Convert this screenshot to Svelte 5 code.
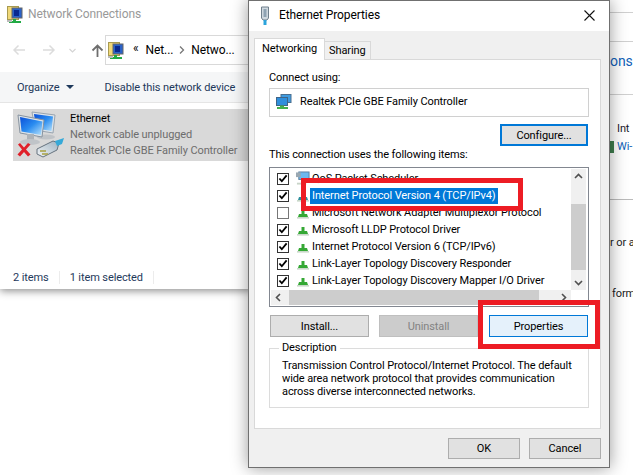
<script lang="ts">
  const items = [
    { label: 'QoS Packet Scheduler', checked: true, icon: 'qos' },
    { label: 'Internet Protocol Version 4 (TCP/IPv4)', checked: true, selected: true },
    { label: 'Microsoft Network Adapter Multiplexor Protocol', checked: false },
    { label: 'Microsoft LLDP Protocol Driver', checked: true },
    { label: 'Internet Protocol Version 6 (TCP/IPv6)', checked: true },
    { label: 'Link-Layer Topology Discovery Responder', checked: true },
    { label: 'Link-Layer Topology Discovery Mapper I/O Driver', checked: true },
  ];
</script>

{#snippet netIcon()}
  <svg width="16" height="17" viewBox="0 0 16 17">
    <rect x="0.5" y="0.5" width="11" height="13" fill="#f0d878" stroke="#a89a50" />
    <rect x="5" y="2" width="10" height="10" fill="#2a62c8" stroke="#666" />
    <rect x="7" y="4" width="5" height="6" fill="#0a2a90" />
    <path d="M6 13h3v2h5v2H2v-2h4z" fill="#22aa44" />
    <rect x="0" y="14" width="5" height="2" fill="#bbb" />
  </svg>
{/snippet}

{#snippet greenNet(color = '#35a835')}
  <svg class="item-icon" width="14" height="15" viewBox="0 0 14 15">
    <path d="M5.500 5h3v4h-3z" fill={color} />
    <path d="M3 9h8l1 3H2z" fill={color} />
    <rect x="1" y="12" width="12" height="1.600" fill="#c9d8c9" />
  </svg>
{/snippet}

{#snippet chev(d)}
  <svg width="9" height="9" viewBox="0 0 9 9"><path d={d} fill="none" stroke="#505050" stroke-width="1.600" /></svg>
{/snippet}

<div class="desktop">
  <!-- window behind, only its right edge shows -->
  <div class="back">
    <div class="back-sec s1"></div>
    <div class="back-sec s2"></div>
    <div class="back-sec s3"><span class="link big">ons</span></div>
    <div class="back-sec s4">
      <div class="int">Int</div>
      <div class="wifi"><i class="bar"></i><span class="link">Wi-</span></div>
    </div>
    <div class="frag f1">r or a</div>
    <div class="frag f2">form</div>
  </div>

  <div class="explorer">
    <div class="ex-title">
      {@render netIcon()}
      <span>Network Connections</span>
    </div>
    <div class="ex-nav">
      <div class="nav-btns">
        <svg width="14" height="12" viewBox="0 0 14 12"><path d="M13 6H2M6.500 1.500 2 6l4.500 4.500" fill="none" stroke="#dcdcdc" stroke-width="1.500" /></svg>
        <svg width="14" height="12" viewBox="0 0 14 12"><path d="M1 6h11M7.500 1.500 12 6l-4.500 4.500" fill="none" stroke="#dcdcdc" stroke-width="1.500" /></svg>
        <svg class="drop" width="7" height="5" viewBox="0 0 7 5"><path d="M.5 1 3.500 4l3-3" fill="none" stroke="#d4d4d4" stroke-width="1.200" /></svg>
        <svg class="up" width="13" height="13" viewBox="0 0 13 13"><path d="M6.500 13V2M1.500 6.500l5-5 5 5" fill="none" stroke="#6e6e6e" stroke-width="1.800" /></svg>
      </div>
      <div class="address">
        {@render netIcon()}
        <span class="crumb-mark">«</span>
        <span>Net...</span>
        <svg width="6" height="8" viewBox="0 0 6 8"><path d="M1 .5 4.500 4 1 7.500" fill="none" stroke="#777" stroke-width="1.300" /></svg>
        <span>Netwo...</span>
      </div>
    </div>
    <div class="ex-toolbar">
      <span>Organize</span>
      <i class="caret"></i>
      <span class="disable">Disable this network device</span>
    </div>
    <div class="ex-list">
      <div class="conn">
        <svg class="conn-icon" width="50" height="50" viewBox="0 0 50 50">
          <defs>
            <linearGradient id="scr" x1="0" y1="0" x2="1" y2="1">
              <stop offset="0" stop-color="#0a4fd8" />
              <stop offset="0.5" stop-color="#2a8cf0" />
              <stop offset="1" stop-color="#b8e2fb" />
            </linearGradient>
            <linearGradient id="plug" x1="0" y1="1" x2="1" y2="0">
              <stop offset="0" stop-color="#f2f5f7" />
              <stop offset="1" stop-color="#9fb2c0" />
            </linearGradient>
          </defs>
          <path d="M17 3 40 6 38 24 20 21z" fill="#dde4ea" stroke="#98a4b0" />
          <path d="M19 5 38 7.500 36.500 22 21 19.500z" fill="url(#scr)" />
          <ellipse cx="31" cy="28" rx="9" ry="2.500" fill="#bfc3c7" />
          <path d="M3 6 29 11 27 28 5 24z" fill="#dde4ea" stroke="#8793a0" />
          <path d="M5 8 27.500 12.500 26 26 6.500 22.500z" fill="url(#scr)" />
          <path d="M12 25h7v6h-7z" fill="#aeb3b8" />
          <ellipse cx="15" cy="33" rx="10" ry="3" fill="#c0c4c8" />
          <path d="M22 40 38 32l6 2-2 7-14 7-6-3z" fill="url(#plug)" stroke="#66737f" />
          <path d="M40 32 49 29l-2 6-5 2z" fill="#36a9d8" />
          <path d="M25 42h6M27 45h6" stroke="#a8a040" stroke-width="1.500" />
          <path d="M3 35.500 5 34l4 4.500 4-4.500 2.500 1.500-4.500 5 4.500 5-2.500 2-4-4.500-4 4.500-2.500-2 4.500-5z" fill="#e0202a" />
        </svg>
        <div class="conn-text">
          <div class="conn-name">Ethernet</div>
          <div>Network cable unplugged</div>
          <div>Realtek PCIe GBE Family Controller</div>
        </div>
      </div>
    </div>
    <div class="ex-status">
      <span class="stat">2 items</span>
      <span class="stat">1 item selected</span>
    </div>
  </div>

  <div class="dialog">
    <div class="dlg-title">
      <svg width="10" height="19" viewBox="0 0 10 19">
        <path d="M1.500 1h7v11l-1.500 2h-4L1.500 12z" fill="#cfd8df" stroke="#6f7f8c" />
        <path d="M3.500 3h3v8h-3z" fill="#8ea2b2" />
        <path d="M3.500 14h3v5h-3z" fill="#2ba4dc" />
      </svg>
      <span class="dlg-name">Ethernet Properties</span>
      <svg class="close" width="11" height="11" viewBox="0 0 11 11"><path d="M.5.5l10 10M10.500.5l-10 10" stroke="#111" stroke-width="1.100" /></svg>
    </div>
    <div class="dlg-body">
      <div class="tabs">
        <div class="tab active">Networking</div>
        <div class="tab">Sharing</div>
      </div>
      <div class="panel">
        <div class="lbl connect">Connect using:</div>
        <div class="adapter">
          <svg width="16" height="15" viewBox="0 0 16 15">
            <rect x="5" y="0.500" width="10" height="8" fill="#3f9be0" stroke="#4a6f90" />
            <rect x="0.500" y="3.500" width="11" height="8" fill="#2f8fdc" stroke="#3f6486" />
            <path d="M4 11.500h4v1.500h4v2H1v-2h3z" fill="#44b04c" />
          </svg>
          <span>Realtek PCIe GBE Family Controller</span>
        </div>
        <div class="cfg-row"><button class="btn cfg">Configure...</button></div>
        <div class="lbl uses">This connection uses the following items:</div>
        <div class="listbox">
          <div class="rows">
            {#each items as item, i}
              <div class="row">
                <span class="check" class:off={!item.checked}>
                  {#if item.checked}
                    <svg width="11" height="11" viewBox="0 0 11 11"><path d="M1.500 5.500 4.200 8.500 9.500 2" fill="none" stroke="#000" stroke-width="2" /></svg>
                  {/if}
                </span>
                {#if item.icon === 'qos'}
                  <svg class="item-icon" width="14" height="15" viewBox="0 0 15 15">
                    <rect x="3" y="0.500" width="11" height="8" fill="#6cb8ee" stroke="#5a7f9f" />
                    <rect x="0" y="1" width="5" height="5" fill="#9aa8b2" />
                    <path d="M1 12h10v2H1z" fill="#c8d4c8" />
                  </svg>
                {:else}
                  {@render greenNet(i === 1 ? '#2f8f9c' : '#35a835')}
                {/if}
                <span class="row-label" class:sel={item.selected}>{item.label}</span>
              </div>
            {/each}
          </div>
          <div class="vbar">
            {@render chev('M1 6 4.500 2.500 8 6')}
            <div class="vthumb"></div>
            {@render chev('M1 3 4.500 6.500 8 3')}
          </div>
          <div class="hbar">
            {@render chev('M6 1 2.500 4.500 6 8')}
            <div class="hthumb"></div>
            {@render chev('M3 1 6.500 4.500 3 8')}
          </div>
        </div>
        <div class="btn-row">
          <button class="btn">Install...</button>
          <button class="btn disabled">Uninstall</button>
          <button class="btn hot">Properties</button>
        </div>
        <fieldset class="desc">
          <legend>Description</legend>
          <p>Transmission Control Protocol/Internet Protocol. The default<br />wide area network protocol that provides communication<br />across diverse interconnected networks.</p>
        </fieldset>
      </div>
      <div class="dlg-foot">
        <button class="btn foot">OK</button>
        <button class="btn foot">Cancel</button>
      </div>
    </div>
  </div>

  <!-- red annotations drawn on the screenshot -->
  <div class="mark mark-ip"></div>
  <div class="mark mark-btn"></div>
</div>

<style>
  :global(body) {
    margin: 0;
    background: #fff;
  }

  .desktop {
    position: relative;
    width: 633px;
    height: 475px;
    overflow: hidden;
    background: #fff;
    font-family: Roboto, "Noto Sans", sans-serif;
    font-size: 11px;
    letter-spacing: -0.1px;
    color: #000;
  }

  .back {
    position: absolute;
    left: 600px;
    top: 0;
    width: 33px;
    height: 340px;
    padding-left: 10px;
    box-sizing: border-box;
  }
  .back-sec {
    border-bottom: 1px solid #d0d0d0;
    box-sizing: border-box;
    margin-left: -10px;
    padding-left: 10px;
  }
  .s1 { height: 13px; }
  .s2 { height: 29px; }
  .s3 { height: 53px; padding-top: 11px; }
  .s4 { height: 105px; padding-top: 25px; border-color: #bbb; }
  .big { font-size: 14px; }
  .link { color: #0f5fb8; }
  .int { margin-left: 7px; color: #1a1a2a; line-height: 18px; }
  .wifi {
    display: flex;
    align-items: center;
    gap: 3px;
    line-height: 18px;
  }
  .bar {
    width: 4px;
    height: 12px;
    background: #3f7f4f;
  }
  .frag { color: #222; white-space: nowrap; }
  .f1 { margin-top: 36px; }
  .f2 { margin: 38px 0 0 2px; }

  .explorer {
    position: absolute;
    left: 0;
    top: 0;
    width: 252px;
    height: 289px;
    display: flex;
    flex-direction: column;
    background: #fff;
    box-shadow: 0 2px 8px rgba(0, 0, 0, 0.45);
  }
  .ex-title {
    display: flex;
    align-items: center;
    gap: 5px;
    height: 28px;
    padding-left: 7px;
    font-size: 12px;
    color: #999;
  }
  .ex-nav {
    display: flex;
    align-items: flex-start;
    height: 44px;
    padding-top: 7px;
    box-sizing: border-box;
  }
  .nav-btns {
    display: flex;
    align-items: center;
    width: 105px;
    height: 30px;
    padding-left: 12px;
    box-sizing: border-box;
    gap: 16px;
  }
  .drop { margin-left: -3px; }
  .up { margin-left: -1px; }
  .address {
    display: flex;
    align-items: center;
    flex: 1;
    height: 30px;
    padding-left: 2px;
    gap: 6px;
    border: 1px solid #d9d9d9;
    border-right: none;
    box-sizing: border-box;
    white-space: nowrap;
    font-size: 12px;
  }
  .crumb-mark { margin: -4px 1px 0 3px; }
  .ex-toolbar {
    display: flex;
    align-items: center;
    height: 31px;
    padding-left: 17px;
    box-sizing: border-box;
    background: #f5f6f7;
    border-bottom: 1px solid #e5e5e5;
    color: #1e395b;
    white-space: nowrap;
    overflow: hidden;
  }
  .caret {
    width: 0;
    height: 0;
    margin-left: 6px;
    border: 4px solid transparent;
    border-top-color: #1e395b;
    border-bottom: none;
  }
  .disable { margin-left: 31px; }
  .ex-list {
    flex: 1;
    padding: 6px 0 0 13px;
  }
  .conn {
    display: flex;
    height: 52px;
    background: #d9d9d9;
    overflow: hidden;
  }
  .conn-icon {
    flex-shrink: 0;
    margin: 0 5px 0 2px;
  }
  .conn-text {
    color: #6d6d6d;
    line-height: 16px;
    padding-top: 2px;
    white-space: nowrap;
  }
  .conn-name { color: #000; }
  .ex-status {
    display: flex;
    height: 18px;
    padding-left: 13px;
    align-items: flex-start;
    color: #1e395b;
  }
  .stat {
    padding-right: 10px;
    margin-right: 10px;
    line-height: 13px;
    border-right: 1px solid #ececec;
  }

  .dialog {
    position: absolute;
    left: 248px;
    top: 0;
    width: 362px;
    height: 468px;
    display: flex;
    flex-direction: column;
    box-sizing: border-box;
    background: #f0f0f0;
    border: 1px solid #707070;
    box-shadow: 0 0 16px rgba(0, 0, 0, 0.4);
  }
  .dlg-title {
    display: flex;
    align-items: center;
    height: 30px;
    flex-shrink: 0;
    padding: 0 14px 2px 11px;
    box-sizing: border-box;
    background: #fff;
    font-size: 12px;
  }
  .dlg-name {
    flex: 1;
    margin-left: 9px;
  }
  .dlg-body {
    flex: 1;
    padding: 7px 8px 0 5px;
  }
  .tabs {
    display: flex;
    align-items: flex-end;
    height: 21px;
    position: relative;
    z-index: 1;
  }
  .tab {
    box-sizing: border-box;
    height: 18px;
    padding: 0 4px;
    line-height: 18px;
    border: 1px solid #d9d9d9;
    border-bottom: none;
    border-left: none;
    background: #f0f0f0;
  }
  .tab.active {
    height: 22px;
    margin-bottom: -1px;
    padding: 0 7px;
    line-height: 19px;
    border-left: 1px solid #d9d9d9;
    background: #fff;
  }
  .panel {
    box-sizing: border-box;
    height: 370px;
    padding: 0 11px 0 14px;
    background: #fff;
    border: 1px solid #d9d9d9;
  }
  .lbl { line-height: 16px; }
  .connect { margin-top: 10px; }
  .adapter {
    display: flex;
    align-items: center;
    gap: 8px;
    box-sizing: border-box;
    height: 29px;
    margin-top: 2px;
    padding: 0 0 3px 6px;
    border: 1px solid #d0d0d0;
  }
  .cfg-row {
    display: flex;
    justify-content: flex-end;
    margin: 7px 1px 0 0;
  }
  .btn {
    box-sizing: border-box;
    width: 99px;
    height: 22px;
    padding: 0;
    font: inherit;
    letter-spacing: inherit;
    color: #000;
    background: #e1e1e1;
    border: 1px solid #adadad;
  }
  .cfg {
    width: 88px;
    border: 2px solid #0078d7;
  }
  .uses { margin-top: 1px; }
  .listbox {
    position: relative;
    box-sizing: border-box;
    height: 140px;
    margin-top: 4px;
    width: 320px;
    background: #fff;
    border: 1px solid #828790;
  }
  .rows { padding: 2px 0 0 7px; }
  .row {
    display: flex;
    align-items: center;
    height: 17px;
    white-space: nowrap;
  }
  .check {
    display: flex;
    align-items: center;
    justify-content: center;
    box-sizing: border-box;
    width: 12px;
    height: 12px;
    background: #fff;
    border: 1px solid #333;
  }
  .check.off { border-color: #777; }
  .item-icon { margin-left: 7px; }
  .row-label {
    padding: 0 2px;
    line-height: 16px;
  }
  .sel {
    color: #fff;
    background: #0078d7;
  }
  .vbar {
    position: absolute;
    right: 2px;
    top: 1px;
    width: 15px;
    height: 121px;
    display: flex;
    flex-direction: column;
    align-items: center;
    justify-content: space-between;
    padding: 3px 0;
    box-sizing: border-box;
    background: #f0f0f0;
  }
  .vthumb {
    width: 15px;
    height: 66px;
    margin-top: 23px;
    margin-bottom: auto;
    background: #cdcdcd;
  }
  .hbar {
    position: absolute;
    left: 1px;
    right: 17px;
    bottom: 1px;
    height: 15px;
    display: flex;
    align-items: center;
    padding: 0 3px;
    box-sizing: border-box;
    background: #f0f0f0;
  }
  .hthumb {
    width: 250px;
    height: 15px;
    margin: 0 auto 0 6px;
    background: #cdcdcd;
  }
  .btn-row {
    display: flex;
    gap: 10px;
    margin: 8px 0 0 1px;
  }
  .disabled {
    color: #838383;
    background: #cccccc;
    border-color: #bfbfbf;
  }
  .hot {
    margin-left: 1px;
    background: #e5f1fb;
    border-color: #0078d7;
  }
  .desc {
    box-sizing: border-box;
    width: 320px;
    height: 67px;
    margin: 4px 0 0;
    padding: 4px 10px 0 12px;
    border: 1px solid #dcdcdc;
  }
  .desc legend {
    padding: 0 3px;
    margin-left: -3px;
    line-height: 14px;
  }
  .desc p {
    margin: 0;
    line-height: 13px;
    white-space: nowrap;
  }
  .dlg-foot {
    display: flex;
    justify-content: flex-end;
    gap: 9px;
    margin-top: 9px;
  }
  .foot {
    width: 72px;
    height: 21px;
  }

  .mark {
    position: absolute;
    box-sizing: border-box;
    border: 5px solid #ed1c24;
  }
  .mark-ip {
    left: 301px;
    top: 178px;
    width: 222px;
    height: 33px;
  }
  .mark-btn {
    left: 478px;
    top: 300px;
    width: 122px;
    height: 49px;
  }
</style>
